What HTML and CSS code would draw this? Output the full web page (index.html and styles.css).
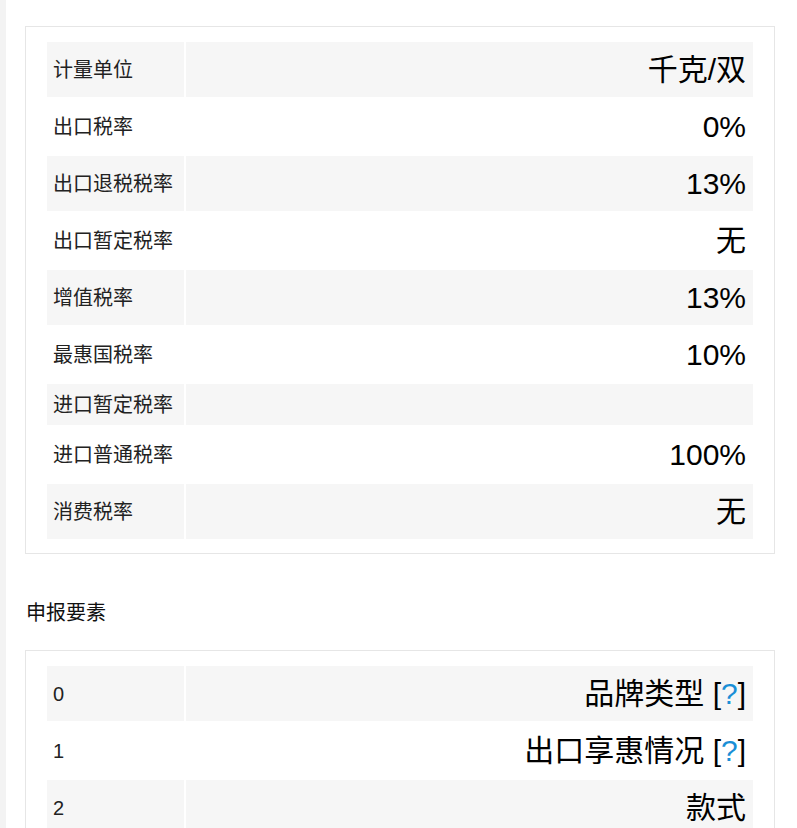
FILE: index.html
```html
<!DOCTYPE html>
<html lang="zh-CN">
<head>
<meta charset="utf-8">
<title>税率信息</title>
<link rel="stylesheet" href="styles.css">
</head>
<body>
<div class="page">
  <div class="panel">
    <table class="info">
      <tr class="odd"><td class="k">计量单位</td><td class="v">千克/双</td></tr>
      <tr><td class="k">出口税率</td><td class="v">0%</td></tr>
      <tr class="odd"><td class="k">出口退税税率</td><td class="v">13%</td></tr>
      <tr><td class="k">出口暂定税率</td><td class="v">无</td></tr>
      <tr class="odd"><td class="k">增值税率</td><td class="v">13%</td></tr>
      <tr><td class="k">最惠国税率</td><td class="v">10%</td></tr>
      <tr class="odd"><td class="k">进口暂定税率</td><td class="v"></td></tr>
      <tr><td class="k">进口普通税率</td><td class="v">100%</td></tr>
      <tr class="odd"><td class="k">消费税率</td><td class="v">无</td></tr>
    </table>
  </div>

  <h3 class="heading">申报要素</h3>

  <div class="panel">
    <table class="info">
      <tr class="odd"><td class="k">0</td><td class="v">品牌类型 [<a class="help" href="#">?</a>]</td></tr>
      <tr><td class="k">1</td><td class="v">出口享惠情况 [<a class="help" href="#">?</a>]</td></tr>
      <tr class="odd"><td class="k">2</td><td class="v">款式</td></tr>
    </table>
  </div>
</div>
</body>
</html>
```

FILE: styles.css
```css
html, body {
  margin: 0;
  padding: 0;
  background: #ffffff;
}

body {
  font-family: "Liberation Sans", "Noto Sans CJK SC", sans-serif;
  color: #222222;
}

.page {
  border-left: 6px solid #f3f3f3;
  min-height: 100vh;
  padding: 26px 22px 0 19px;
  box-sizing: border-box;
}

.panel {
  border: 1px solid #e6e6e6;
  padding: 13px 19px 12px 19px;
}

.info {
  width: 100%;
  border-collapse: separate;
  border-spacing: 2px;
}

.info td {
  padding: 8px 0;
  vertical-align: middle;
}

.info .k {
  width: 131px;
  padding: 9px 0 7px 6px;
  font-size: 20px;
  line-height: 25px;
  color: #222222;
  background: #f6f6f6;
  white-space: nowrap;
}

.info .v {
  padding-right: 7px;
  text-align: right;
  font-size: 30px;
  line-height: 39px;
  color: #000000;
}

.info tr.odd td {
  background: #f6f6f6;
}

.info tr:not(.odd) td {
  background: #ffffff;
}

.heading {
  margin: 46px 0 24px 1px;
  font-size: 20px;
  line-height: 26px;
  font-weight: normal;
  color: #111111;
}

.help {
  color: #1a8fd6;
  text-decoration: none;
}
```
